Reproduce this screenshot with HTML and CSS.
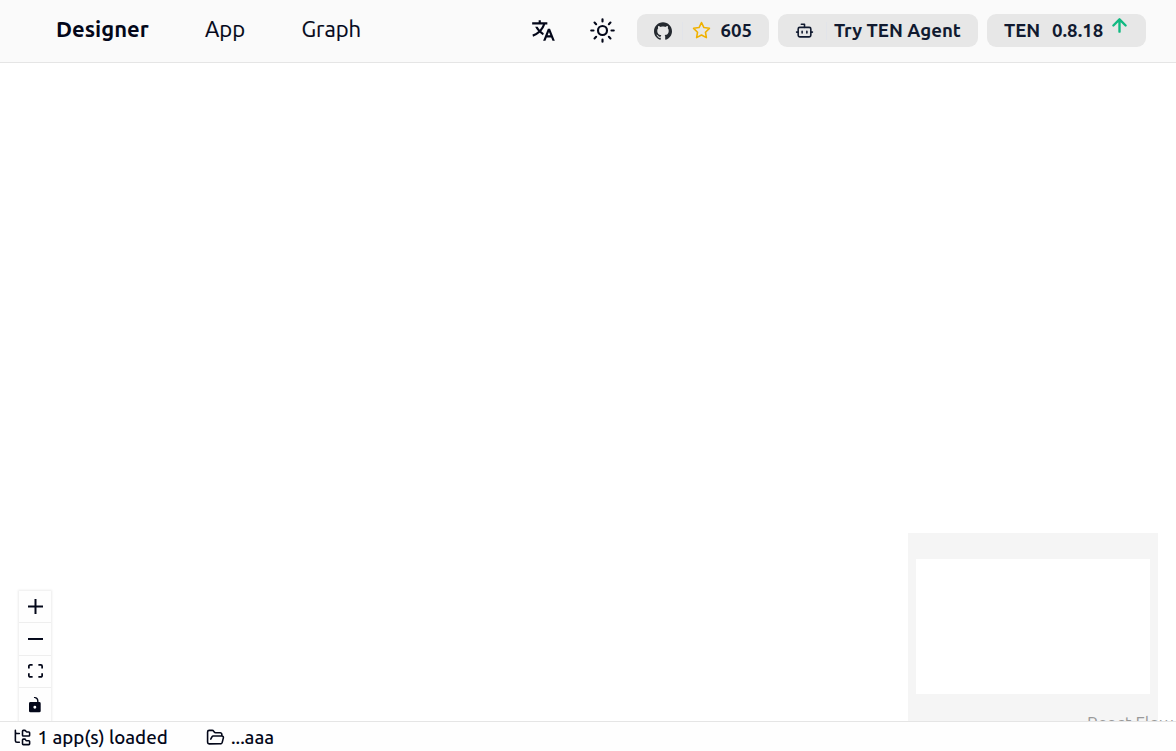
FILE: index.html
```html
<!DOCTYPE html>
<html lang="en">
<head>
<meta charset="utf-8">
<title>TEN Designer</title>
<link rel="stylesheet" href="styles.css">
</head>
<body>
<div class="app">
  <header class="topbar">
    <nav class="menu">
      <a class="menu-item brand">Designer</a>
      <a class="menu-item app-item">App</a>
      <a class="menu-item graph-item">Graph</a>
    </nav>
    <div class="actions">
      <svg class="icon language" viewBox="0 0 24 24" fill="currentColor"><path d="M18.5 10l4.4 11h-2.155l-1.201-3h-4.09l-1.199 3h-2.154L16.5 10h2zM10 2v2h6v2h-1.968a18.222 18.222 0 0 1-3.62 6.301 14.864 14.864 0 0 0 2.336 1.707l-.751 1.878A17.015 17.015 0 0 1 9 13.725a16.676 16.676 0 0 1-6.201 3.548l-.536-1.929a14.7 14.7 0 0 0 5.327-3.042A18.078 18.078 0 0 1 4.767 8h2.24A16.032 16.032 0 0 0 9 10.877a16.165 16.165 0 0 0 2.91-4.876L2 6V4h6V2h2zm7.5 10.885L16.253 16h2.492L17.5 12.885z"/></svg>
      <svg class="icon sun stroked" viewBox="0 0 24 24"><circle cx="12" cy="12" r="4"/><path d="M12 2v2M12 20v2M4.93 4.93l1.41 1.41M17.66 17.66l1.41 1.41M2 12h2M20 12h2M6.34 17.66l-1.41 1.41M19.07 4.93l-1.41 1.41"/></svg>
      <a class="chip github">
        <svg class="icon octocat" viewBox="0 0 24 24" fill="currentColor"><path d="M12 .297c-6.63 0-12 5.373-12 12 0 5.303 3.438 9.8 8.205 11.385.6.113.82-.258.82-.577 0-.285-.01-1.04-.015-2.04-3.338.724-4.042-1.61-4.042-1.61C4.422 18.07 3.633 17.7 3.633 17.7c-1.087-.744.084-.729.084-.729 1.205.084 1.838 1.236 1.838 1.236 1.07 1.835 2.809 1.305 3.495.998.108-.776.417-1.305.76-1.605-2.665-.3-5.466-1.332-5.466-5.93 0-1.31.465-2.38 1.235-3.22-.135-.303-.54-1.523.105-3.176 0 0 1.005-.322 3.3 1.23.96-.267 1.98-.399 3-.405 1.02.006 2.04.138 3 .405 2.28-1.552 3.285-1.23 3.285-1.23.645 1.653.24 2.873.12 3.176.765.84 1.23 1.91 1.23 3.22 0 4.61-2.805 5.625-5.475 5.92.42.36.81 1.096.81 2.22 0 1.606-.015 2.896-.015 3.286 0 .315.21.69.825.57C20.565 22.092 24 17.592 24 12.297c0-6.627-5.373-12-12-12"/></svg>
        <span class="divider"></span>
        <svg class="icon star stroked" viewBox="0 0 24 24"><path d="M12 2l3.09 6.26L22 9.27l-5 4.87 1.18 6.88L12 17.77l-6.18 3.25L7 14.14 2 9.27l6.91-1.01z"/></svg>
        <span class="count">605</span>
      </a>
      <a class="chip agent">
        <svg class="icon bot stroked" viewBox="0 0 24 24"><path d="M12 8V4H8"/><rect x="4" y="8" width="16" height="12" rx="2"/><path d="M2 14h2M20 14h2M15 13v2M9 13v2"/></svg>
        <span class="divider"></span>
        <span class="agent-label">Try TEN Agent</span>
      </a>
      <a class="chip version">
        <span class="ten">TEN</span>
        <span class="number">0.8.18</span>
        <svg class="icon arrow stroked" viewBox="0 0 24 24"><path d="M5 12l7-7 7 7M12 19V5"/></svg>
      </a>
    </div>
  </header>
  <main class="canvas">
    <div class="controls">
      <button class="control"><svg class="glyph plus" viewBox="0 0 32 32"><path d="M32 18.133H18.133V32h-4.266V18.133H0v-4.266h13.867V0h4.266v13.867H32z"/></svg></button>
      <button class="control"><svg class="glyph minus" viewBox="0 0 32 5"><path d="M0 0h32v4.2H0z"/></svg></button>
      <button class="control"><svg class="glyph fit" viewBox="0 0 32 30"><path d="M3.692 4.63c0-.53.4-.938.939-.938h5.215V0H4.708C2.13 0 0 2.054 0 4.63v5.216h3.692V4.631zM27.354 0h-5.2v3.692h5.17c.53 0 .984.4.984.939v5.215H32V4.631A4.624 4.624 0 0 0 27.354 0zm.954 24.83c0 .532-.4.94-.939.94h-5.215v3.768h5.215c2.577 0 4.631-2.13 4.631-4.707v-5.139h-3.692v5.139zm-23.677.94a.919.919 0 0 1-.939-.94v-5.138H0v5.139c0 2.577 2.13 4.707 4.708 4.707h5.138V25.77H4.631z"/></svg></button>
      <button class="control"><svg class="glyph lock" viewBox="0 0 25 32"><path d="M21.333 10.667H19.81V7.619C19.81 3.429 16.38 0 12.19 0c-4.114 1.828-1.37 2.133.305 2.438 1.676.305 4.42 2.59 4.42 5.181v3.048H3.047A3.056 3.056 0 0 0 0 13.714v15.238A3.056 3.056 0 0 0 3.048 32h18.285a3.056 3.056 0 0 0 3.048-3.048V13.714a3.056 3.056 0 0 0-3.048-3.047zM12.19 24.533a3.056 3.056 0 0 1-3.047-3.047 3.056 3.056 0 0 1 3.047-3.048 3.056 3.056 0 0 1 3.048 3.048 3.056 3.056 0 0 1-3.048 3.047z"/></svg></button>
    </div>
    <div class="minimap"><div class="viewport"></div></div>
    <span class="attribution">React Flow</span>
  </main>
  <footer class="statusbar">
    <svg class="icon tree stroked" viewBox="0 0 24 24"><path d="M20 10a1 1 0 0 0 1-1V6a1 1 0 0 0-1-1h-2.500a1 1 0 0 1-.8-.4l-.9-1.200A1 1 0 0 0 15 3h-2a1 1 0 0 0-1 1v5a1 1 0 0 0 1 1ZM20 21a1 1 0 0 0 1-1v-3a1 1 0 0 0-1-1h-2.900a1 1 0 0 1-.88-.55l-.42-.85a1 1 0 0 0-.92-.6H13a1 1 0 0 0-1 1v5a1 1 0 0 0 1 1ZM3 5a2 2 0 0 0 2 2h3M3 3v13a2 2 0 0 0 2 2h3"/></svg>
    <span class="loaded">1 app(s) loaded</span>
    <svg class="icon folder stroked" viewBox="0 0 24 24"><path d="M6 14l1.500-2.900A2 2 0 0 1 9.240 10H20a2 2 0 0 1 1.940 2.500l-1.540 6a2 2 0 0 1-1.950 1.500H4a2 2 0 0 1-2-2V5a2 2 0 0 1 2-2h3.900a2 2 0 0 1 1.690.9l.81 1.200a2 2 0 0 0 1.670.9H18a2 2 0 0 1 2 2v2"/></svg>
    <span class="path">...aaa</span>
  </footer>
</div>
</body>
</html>
```

FILE: styles.css
```css
* { box-sizing: border-box; }
body { margin: 0; background: #fff; color: #030719; font-family: Ubuntu, "Noto Sans", sans-serif; font-size: 18.67px; }
.app { display: flex; flex-direction: column; height: 751px; overflow: hidden; }
.icon { display: block; flex: none; }
.stroked { fill: none; stroke: currentColor; stroke-width: 2; stroke-linecap: round; stroke-linejoin: round; }
.topbar { display: flex; justify-content: space-between; flex: none; height: 63px; padding: 0 30px 0 56px; background: #fafafa; border-bottom: 1px solid #e5e5e5; }
.menu { display: flex; height: 57px; align-items: center; font-size: 22px; white-space: nowrap; -webkit-text-stroke: 0.2px currentColor; }
.brand { width: 149px; font-weight: 600; -webkit-text-stroke: 0; }
.app-item { width: 96.5px; }
.actions { display: flex; height: 61px; align-items: center; }
.language { width: 26px; height: 26px; margin-right: 33px; }
.sun { width: 27px; height: 27px; margin-right: 21px; stroke-width: 1.9; }
.chip { display: flex; align-items: center; height: 33px; border-radius: 9px; background: #e7e7e7; color: #111a30; font-weight: 600; line-height: 20px; white-space: nowrap; }
.divider { width: 1px; height: 18px; background: #e2e4e9; }
.github { width: 132px; margin-right: 9px; padding-left: 17px; }
.octocat { width: 18px; height: 18px; margin-right: 10px; color: #24292f; }
.star { width: 19px; height: 19px; margin: 0 9.5px 0 9px; color: #f0b100; }
.agent { width: 200px; margin-right: 9px; padding-left: 17px; }
.bot { width: 19px; height: 19px; margin-right: 12px; }
.agent-label { margin-left: 7px; }
.version { width: 159px; padding-left: 17px; }
.ten { width: 48px; }
.number { width: 57px; }
.arrow { width: 21px; height: 21px; margin-bottom: 10px; color: #10b981; stroke-width: 2.7; }
.canvas { position: relative; flex: 1; min-height: 0; overflow: hidden; background: #fff; }
.controls { position: absolute; left: 19px; top: 528px; width: 32px; box-shadow: 0 0 2px 1px rgba(0,0,0,.08); }
.control { display: flex; align-items: center; justify-content: center; width: 32px; height: 32.4px; padding: 0; border: 0; border-bottom: 1px solid #eee; background: #fefefe; }
.control:last-child { height: 34px; border-bottom: 0; }
.glyph { display: block; width: 15px; fill: #030719; }
.lock { width: 12px; }
.minimap { position: absolute; left: 908px; top: 470px; width: 250px; height: 188px; padding: 26px 8px; background: #f5f5f5; }
.viewport { height: 135px; background: #fff; }
.attribution { position: absolute; left: 1087px; top: 650px; color: #999; font-size: 17.5px; line-height: 20px; white-space: nowrap; }
.statusbar { display: flex; align-items: center; flex: none; height: 30px; padding-left: 13px; border-top: 1px solid #e5e5e5; padding-top: 2px; background: #fefefe; font-size: 18.7px; font-weight: 500; line-height: 20px; white-space: nowrap; }
.tree { width: 19px; height: 19px; margin-right: 5.5px; }
.loaded { width: 168.5px; }
.folder { width: 19px; height: 19px; margin-right: 6px; }
```
